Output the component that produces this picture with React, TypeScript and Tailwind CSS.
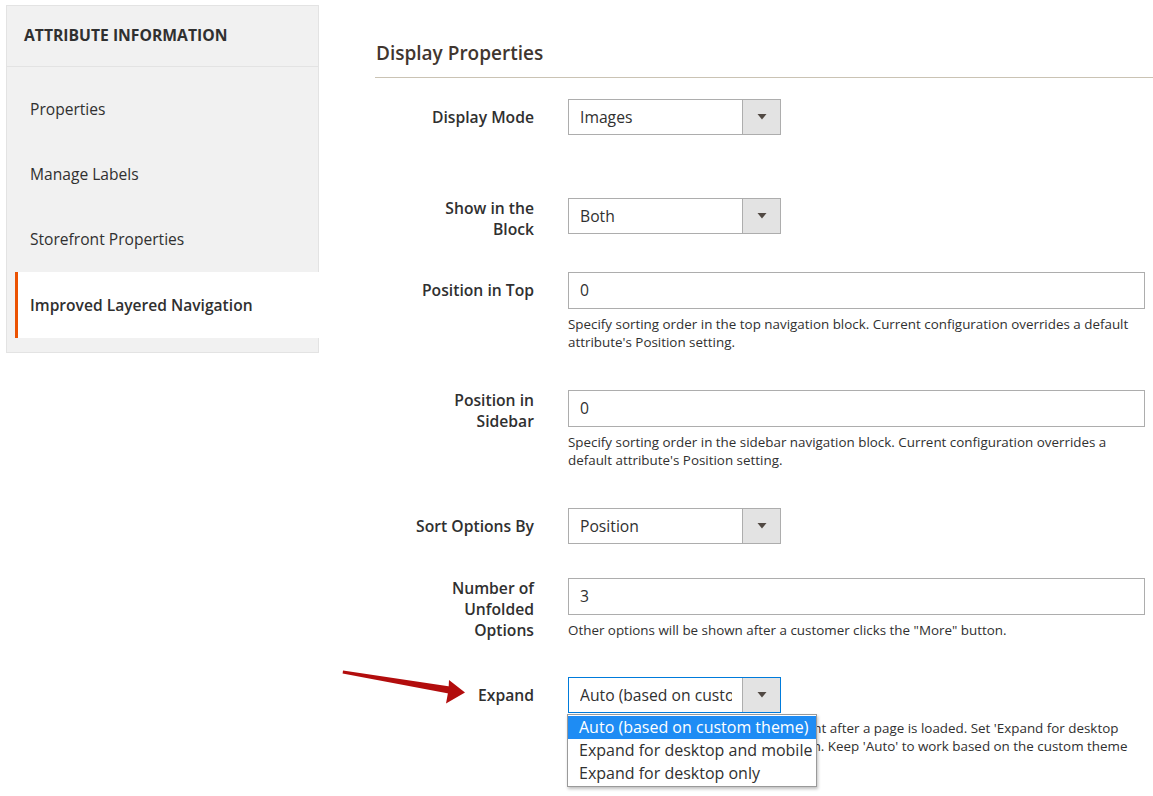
import { ReactNode } from "react";

const NAV = ["Properties", "Manage Labels", "Storefront Properties"];

function Caret() {
  return (
    <svg width="10" height="6" viewBox="0 0 10 6" className="block">
      <path d="M0.5 0 L9.5 0 L5 5.5 Z" fill="#514943" />
    </svg>
  );
}

function Select({ value, focused }: { value: string; focused?: boolean }) {
  return (
    <div
      className={`flex h-[36px] w-[213px] border bg-white ${
        focused ? "border-[#007bdb]" : "border-[#adadad]"
      }`}
    >
      <div className="min-w-0 flex-1 pl-[11px] pr-[10px]">
        <div className="overflow-hidden whitespace-nowrap text-[15.7px] leading-[34px] text-[#303030]">
          {value}
        </div>
      </div>
      <div className="flex w-[38px] items-center justify-center border-l border-[#adadad] bg-[#e3e3e3]">
        <Caret />
      </div>
    </div>
  );
}

function Input({ value }: { value: string }) {
  return (
    <div className="h-[37px] w-[577px] border border-[#adadad] bg-white pl-[11px] text-[15.7px] leading-[35px] text-[#303030]">
      {value}
    </div>
  );
}

function Note({ children }: { children: ReactNode }) {
  return (
    <p className="mt-[6px] w-[577px] text-[13.4px] leading-[18px] text-[#303030]">
      {children}
    </p>
  );
}

function Row({
  label,
  multi,
  height,
  overlay,
  children,
}: {
  label: ReactNode;
  multi?: boolean;
  height: string;
  overlay?: ReactNode;
  children: ReactNode;
}) {
  return (
    <div className={`flex ${height}`}>
      <div
        className={`relative w-[159px] shrink-0 text-right text-[15.7px] font-semibold leading-[21px] text-[#303030] ${
          multi ? "pt-0" : "pt-[8px]"
        }`}
      >
        {overlay}
        {label}
      </div>
      <div className="ml-[34px] flex flex-col">{children}</div>
    </div>
  );
}

// red annotation arrow pointing at the "Expand" label
function RedArrow() {
  return (
    <svg
      width="130"
      height="45"
      viewBox="0 0 130 45"
      className="pointer-events-none absolute left-[-35px] top-[-12px]"
    >
      <polygon points="3,5.6 110,21.5 108.6,28.6 2.6,8.4" fill="#b20d0d" />
      <polygon points="109,15 125,27.5 106,38.5 108.5,25" fill="#b20d0d" />
    </svg>
  );
}

export default function App() {
  return (
    <div className="flex min-h-[796px] w-[1153px] bg-white font-['Open_Sans',sans-serif] text-[#303030]">
      {/* sidebar tabs */}
      <div className="w-[319px] shrink-0 pl-[6px] pt-[5px]">
        <div className="border border-[#e3e3e3] bg-[#f1f1f1] pb-[14px]">
          <div className="flex h-[61px] items-center border-b border-[#e3e3e3] pl-[17px] text-[15.7px] font-bold uppercase text-[#303030]">
            Attribute Information
          </div>
          <ul className="pt-[10px]">
            {NAV.map((n) => (
              <li
                key={n}
                className="ml-[8px] pl-[15px] text-[15.6px] leading-[65px] text-[#303030]"
              >
                {n}
              </li>
            ))}
            <li className="-mr-px ml-[8px] border-l-[3px] border-[#eb5202] bg-white pl-[12px] text-[15.6px] font-semibold leading-[66px] text-[#303030]">
              Improved Layered Navigation
            </li>
          </ul>
        </div>
      </div>

      {/* main form */}
      <div className="ml-[56px] flex-1">
        <h2 className="pl-[1px] pt-[39px] text-[19px] font-semibold leading-[28px] text-[#41362f]">
          Display Properties
        </h2>
        <div className="mt-[10px] border-b border-[#cac3b4]" />

        <div className="pt-[21px]">
          <Row label="Display Mode" height="h-[99px]">
            <Select value="Images" />
          </Row>
          <Row
            label={
              <>
                Show in the
                <br />
                Block
              </>
            }
            multi
            height="h-[74px]"
          >
            <Select value="Both" />
          </Row>
          <Row label="Position in Top" height="h-[118px]">
            <Input value="0" />
            <Note>
              Specify sorting order in the top navigation block. Current
              configuration overrides a default attribute's Position setting.
            </Note>
          </Row>
          <Row
            label={
              <>
                Position in
                <br />
                Sidebar
              </>
            }
            multi
            height="h-[118px]"
          >
            <Input value="0" />
            <Note>
              Specify sorting order in the sidebar navigation block. Current
              configuration overrides a default attribute's Position setting.
            </Note>
          </Row>
          <Row label="Sort Options By" height="h-[70px]">
            <Select value="Position" />
          </Row>
          <Row
            label={
              <>
                Number of
                <br />
                Unfolded
                <br />
                Options
              </>
            }
            multi
            height="h-[99px]"
          >
            <Input value="3" />
            <Note>
              Other options will be shown after a customer clicks the "More"
              button.
            </Note>
          </Row>
          <Row label="Expand" overlay={<RedArrow />} height="h-[110px]">
            <div className="relative">
              <Select value="Auto (based on custom theme)" focused />
              <Note>
                To expand the filter block's contents right after a page is
                loaded. Set 'Expand for desktop
                <br />
                and mobile' to always expand the option. Keep 'Auto' to work
                based on the custom theme
              </Note>
              <ul className="absolute left-[-1px] top-[37px] w-[250px] border border-[#9a9a9a] bg-white py-px text-[16px] leading-[23px] text-[#303030] shadow-[1px_2px_3px_rgba(0,0,0,0.25)]">
                <li className="bg-[#1e8cf4] pl-[11px] text-white">
                  Auto (based on custom theme)
                </li>
                <li className="pl-[11px]">Expand for desktop and mobile</li>
                <li className="pl-[11px]">Expand for desktop only</li>
              </ul>
            </div>
          </Row>
        </div>
      </div>
    </div>
  );
}
